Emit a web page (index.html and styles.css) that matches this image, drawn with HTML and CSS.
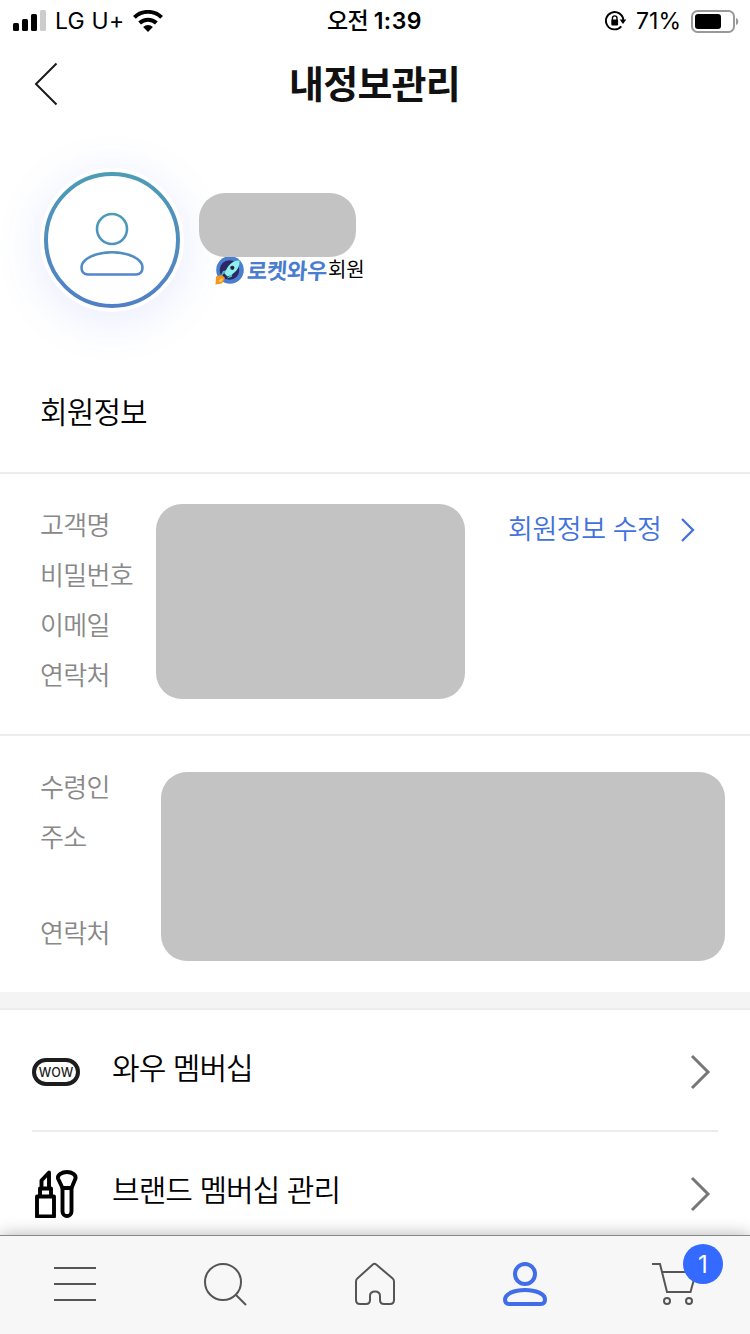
FILE: index.html
```html
<!DOCTYPE html>
<html lang="ko">
<head>
<meta charset="utf-8">
<title>내정보관리</title>
<link rel="stylesheet" href="styles.css">
</head>
<body>
<div class="screen">
  <div class="status">
    <div class="status-left">
      <svg class="signal" width="34" height="22" viewBox="0 0 34 22"><rect x="0" y="13" width="6" height="8" rx="1.5"/><rect x="9" y="9" width="6" height="12" rx="1.5"/><rect x="18" y="4" width="6" height="17" rx="1.5"/><rect x="27" y="0" width="6" height="21" rx="1.5" fill="#ccc"/></svg>
      <span class="carrier">LG U+</span>
      <svg class="wifi" width="30" height="22" viewBox="0 0 30 22"><g fill="none" stroke="#000" stroke-width="4"><path d="M1.400 7.400a19.500 19.500 0 0 1 27.200 0"/><path d="M6.600 13a12.200 12.200 0 0 1 16.800 0"/></g><path d="M10.100 17.100a7 7 0 0 1 9.800 0L15 22z"/></svg>
    </div>
    <div class="time">오전 <span class="clock">1:39</span></div>
    <div class="status-right">
      <svg width="22" height="20" viewBox="0 0 22 20"><path d="M16.300 15.300A8.700 8.700 0 1 1 18.300 9" fill="none" stroke="#000" stroke-width="1.900"/><path d="M14.700 8.600h6.600L18 13z"/><rect x="6.300" y="8.600" width="6.800" height="5.800" rx=".8"/><path d="M7.400 9V7.200a2.300 2.300 0 0 1 4.600 0V9" fill="none" stroke="#000" stroke-width="1.400"/></svg>
      <span class="percent">71%</span>
      <svg width="48" height="23" viewBox="0 0 48 23"><rect x="1" y="1" width="42" height="21" rx="5.500" fill="#fff" stroke="#999" stroke-width="2"/><rect x="4" y="4" width="26" height="15" rx="3"/><path d="M45 8c3 .8 3 6.200 0 7z" fill="#999"/></svg>
    </div>
  </div>
  <header class="header">
    <svg class="back" width="24" height="44" viewBox="0 0 24 44"><path d="M22.500 1.500 2 22l20.500 20.500" fill="none" stroke="#1a1a1a" stroke-width="2"/></svg>
    <h1 class="title">내정보관리</h1>
  </header>
  <main class="content">
    <section class="profile">
      <div class="avatar">
        <svg width="136" height="136" viewBox="0 0 136 136">
          <defs><linearGradient id="ring" gradientUnits="userSpaceOnUse" x1="0" y1="0" x2="0" y2="136"><stop offset="0" stop-color="#4b9db5"/><stop offset="1" stop-color="#527fc6"/></linearGradient><linearGradient id="person" gradientUnits="userSpaceOnUse" x1="0" y1="40" x2="0" y2="104"><stop offset="0" stop-color="#4b9db5"/><stop offset="1" stop-color="#5286cc"/></linearGradient></defs>
          <circle cx="68" cy="68" r="66" fill="none" stroke="url(#ring)" stroke-width="4"/>
          <g fill="none" stroke="url(#person)" stroke-width="2.600"><circle cx="68" cy="57" r="15"/><path d="M44 102.500h48c4.500 0 6.500-3.300 6.500-7 0-8.500-14-15.300-30.500-15.300s-30.500 6.800-30.500 15.300c0 3.700 2 7 6.500 7z"/></g>
        </svg>
      </div>
      <div class="who">
        <div class="mask mask-name"></div>
        <div class="grade">
          <svg width="29" height="28" viewBox="0 0 29 28"><circle cx="15" cy="13" r="13.800" fill="#4a7fd0"/><circle cx="14.500" cy="13" r="9.800" fill="#2c2766"/><path d="M5 20l3-6 5-1z" fill="#49bfc9"/><path d="M12 21.500l5-1.800.5-5z" fill="#49bfc9"/><path d="M24.500 3.500c-7-.3-11.700 4.500-15 13l3 3c8-3 12.500-8.500 12-16z" fill="#8ef0e6"/><circle cx="17.300" cy="10.800" r="2.100" fill="#252050"/><path d="M1 19.500l6-1.500 3 3-3 5.500-6.500 1z" fill="#f7941d"/><path d="M3.500 24l3-3 1.500 1.200-2 3z" fill="#ffd45a"/></svg>
          <span class="wow-name">로켓와우</span><span class="member">회원</span>
        </div>
      </div>
    </section>
    <h2 class="section-title">회원정보</h2>
    <section class="info account">
      <div class="labels"><span>고객명</span><span>비밀번호</span><span>이메일</span><span>연락처</span></div>
      <div class="mask mask-account"></div>
      <a class="edit"><span>회원정보 수정</span><svg width="16" height="26" viewBox="0 0 16 26"><path d="M2 2l11 11L2 24" fill="none" stroke="#4272dc" stroke-width="2.300"/></svg></a>
    </section>
    <section class="info address">
      <div class="labels"><span>수령인</span><span class="tall">주소</span><span>연락처</span></div>
      <div class="mask mask-address"></div>
    </section>
    <div class="divider"></div>
    <nav class="menu">
      <a class="row">
        <span class="row-icon"><svg width="48" height="28" viewBox="0 0 48 28"><rect x="2" y="2" width="44" height="24" rx="12" fill="#fff" stroke="#1d1d1d" stroke-width="4"/><text class="wow-text" x="24" y="18.500" text-anchor="middle">WOW</text></svg></span>
        <span class="row-label">와우 멤버십</span>
        <svg class="chevron" width="22" height="36" viewBox="0 0 22 36"><path d="M3 2l16 16L3 34" fill="none" stroke="#777" stroke-width="3"/></svg>
      </a>
      <a class="row">
        <span class="row-icon"><svg width="48" height="48" viewBox="0 0 48 48" fill="none" stroke="#000" stroke-width="3.900" stroke-linejoin="round"><rect x="5" y="26.500" width="17" height="20"/><path d="M8 26V18.500h11V26M9.500 18v-7.500L17 2.500V18"/><path d="M30.500 18L26 8.500C25.200 5 30 2 35 2s9.300 3 8.500 6.500L39.500 18z"/><path d="M30.500 18h9v23.500a4.500 4.500 0 0 1-9 0z"/></svg></span>
        <span class="row-label">브랜드 멤버십 관리</span>
        <svg class="chevron" width="22" height="36" viewBox="0 0 22 36"><path d="M3 2l16 16L3 34" fill="none" stroke="#777" stroke-width="3"/></svg>
      </a>
    </nav>
  </main>
  <nav class="tabs">
    <a class="tab"><svg width="48" height="48" viewBox="0 0 48 48"><path d="M3 7h42M3 23h42M3 39h42" stroke="#555" stroke-width="2"/></svg></a>
    <a class="tab"><svg width="48" height="48" viewBox="0 0 48 48" fill="none" stroke="#555" stroke-width="2"><circle cx="22" cy="21" r="18"/><path d="M35 34l10 10"/></svg></a>
    <a class="tab"><svg width="48" height="48" viewBox="0 0 48 48" fill="none" stroke="#555" stroke-width="2"><path d="M22.300 3.500q1.700-1.400 3.400 0l16.500 14q1.300 1.100 1.300 3V39q0 4-4 4h-6q-4 0-4-4v-4q0-4.500-5-4.500t-5 4.500v4q0 4-4 4h-6q-4 0-4-4V20.500q0-1.900 1.300-3z" transform="translate(-.5 0)"/></svg></a>
    <a class="tab"><svg width="48" height="48" viewBox="0 0 48 48" fill="none" stroke="#3f6ee8" stroke-width="4"><circle cx="24" cy="13" r="10"/><path d="M8 43h32c3.500 0 4-2.500 4-4.500C44 33 35 29 24 29S4 33 4 38.500c0 2 .5 4.500 4 4.500z"/></svg></a>
    <a class="tab"><span class="cart"><svg width="48" height="48" viewBox="0 0 48 48" fill="none" stroke="#555" stroke-width="2"><path d="M1 3h8l7 28h23.500L45 11H11"/><circle cx="16" cy="40" r="3"/><circle cx="38" cy="40" r="3"/></svg><span class="badge">1</span></span></a>
  </nav>
</div>
</body>
</html>
```
FILE: styles.css
```css
* { box-sizing: border-box; }

body {
  margin: 0;
  background: #fff;
  color: #000;
  font-family: "Noto Sans CJK KR", sans-serif;
}

svg { display: block; flex: none; }

.screen {
  display: flex;
  flex-direction: column;
  width: 750px;
  height: 1334px;
  overflow: hidden;
}

.status {
  display: grid;
  grid-template-columns: 1fr auto 1fr;
  align-items: center;
  height: 40px;
  padding: 0 11px 0 13px;
  font-family: Inter, "Noto Sans CJK KR", sans-serif;
  font-size: 23px;
  line-height: 42px;
}
.status-left, .status-right { display: flex; align-items: center; }
.signal { margin-right: 8px; }
.carrier { width: 71px; margin-right: 7px; letter-spacing: 0.2px; white-space: nowrap; }
.time { margin-right: 3px; font-size: 23px; font-weight: 500; letter-spacing: -0.6px; }
.clock { font-weight: 600; letter-spacing: 0.5px; }
.status-right { justify-content: flex-end; }
.percent { margin: 0 10px 0 9px; letter-spacing: 0; }

.header {
  display: grid;
  grid-template-columns: 1fr auto 1fr;
  align-items: center;
  height: 88px;
  padding: 0 34px;
}
.title {
  margin: -4px 0 0 -1px;
  color: #111;
  font-size: 38px;
  font-weight: 700;
  letter-spacing: -0.8px;
  line-height: 84px;
}

.content { flex: 1; min-height: 0; overflow: hidden; }

.profile { display: flex; height: 224px; padding: 44px 0 0 44px; }
.avatar {
  width: 136px;
  height: 136px;
  border-radius: 50%;
  background: #fff;
  box-shadow: 0 0 0 4px #fff, 0 8px 48px 2px rgba(80, 110, 250, 0.15);
}
.who { margin: 21px 0 0 19px; }
.mask { flex: none; background: #c3c3c3; }
.mask-name { width: 157px; height: 64px; border-radius: 26px; }
.grade { display: flex; padding-left: 16px; line-height: 24px; white-space: nowrap; }
.wow-name {
  width: 81px;
  margin-left: 3px;
  color: #4a7dce;
  font-size: 22px;
  font-weight: 700;
  letter-spacing: -0.2px;
  transform: skewX(-4deg);
}
.member { font-size: 20px; letter-spacing: -0.2px; }

.section-title {
  height: 122px;
  margin: 0;
  padding-left: 40px;
  border-bottom: 2px solid #ececec;
  font-size: 30px;
  font-weight: 350;
  letter-spacing: -0.9px;
  line-height: 117px;
}

.info { display: flex; padding-left: 40px; }
.account { height: 262px; padding-top: 30px; border-bottom: 2px solid #ececec; }
.address { height: 256px; padding-top: 36px; }
.labels {
  display: flex;
  flex-direction: column;
  color: #888;
  font-size: 26px;
  font-weight: 350;
  letter-spacing: -0.7px;
  line-height: 50px;
  white-space: nowrap;
}
.account .labels { width: 116px; margin-top: -5px; }
.address .labels { width: 121px; margin-top: -11px; }
.tall { height: 96px; }
.mask-account { width: 309px; height: 195px; border-radius: 26px; }
.mask-address { width: 564px; height: 189px; border-radius: 26px; }
.edit {
  display: flex;
  align-items: center;
  height: 52px;
  margin-left: 43px;
  color: #4272dc;
  font-size: 27px;
  font-weight: 350;
  letter-spacing: -0.45px;
}
.edit span { width: 172px; margin-top: -6px; white-space: nowrap; }

.divider { height: 18px; background: #f4f4f4; border-bottom: 2px solid #ececec; }

.row {
  display: flex;
  align-items: center;
  height: 122px;
  margin: 0 32px;
  padding-top: 4px;
  border-bottom: 2px solid #ececec;
}
.row-icon { width: 80px; }
.row-label {
  flex: 1;
  margin-top: -12px;
  font-size: 30px;
  font-weight: 350;
  letter-spacing: -0.95px;
}
.chevron { margin-right: 7px; }
.wow-text { font: 500 12.5px Inter, sans-serif; fill: #1d1d1d; }

.tabs {
  display: grid;
  grid-template-columns: repeat(5, 1fr);
  z-index: 1;
  height: 99px;
  padding-top: 25px;
  border-top: 1px solid #888;
  background: #f7f7f7;
  box-shadow: 0 0 16px rgba(0, 0, 0, 0.3);
}
.tab { display: flex; justify-content: center; }
.cart { position: relative; }
.badge {
  position: absolute;
  top: -17px;
  left: 32px;
  width: 40px;
  height: 40px;
  border-radius: 50%;
  background: #346aff;
  color: #fff;
  font: 24px/41px Inter, sans-serif;
  text-align: center;
}
```
